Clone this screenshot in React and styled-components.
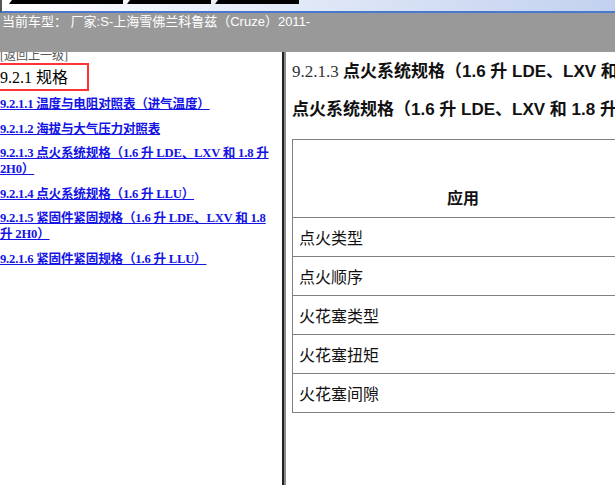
import styled, { createGlobalStyle } from "styled-components";

const GlobalStyle = createGlobalStyle`
  html, body {
    margin: 0;
    padding: 0;
    width: 615px;
    height: 485px;
    overflow: hidden;
    background: #fff;
  }
`;

const Page = styled.div`
  display: flex;
  flex-direction: column;
  width: 615px;
  height: 485px;
`;

const TopStrip = styled.div`
  display: flex;
  gap: 4px;
  height: 11px;
  padding-left: 7px;
  border-left: 2px solid #555;
  border-bottom: 2px solid #4a78cc;
  background: linear-gradient(to right, #ffffff, #c2d1ef);
`;

const Tab = styled.div`
  width: ${(p) => p.w}px;
  height: 4px;
  background: #000;
  clip-path: polygon(3px 0, 100% 0, 100% 100%, 0 100%);
`;

const CarBar = styled.div`
  height: 39px;
  background: #999999;
  color: #fff;
  font-family: "Liberation Sans", "Noto Sans CJK SC", sans-serif;
  font-size: 13px;
  line-height: 17px;
  padding: 0 2px;
  white-space: nowrap;
  box-sizing: border-box;
`;

const Body = styled.div`
  flex: 1;
  display: flex;
  min-height: 0;
`;

const Sidebar = styled.nav`
  width: 282px;
  flex: none;
  overflow: hidden;
  font-family: "Liberation Serif", "Noto Sans CJK SC", serif;
`;

const Divider = styled.div`
  width: 2px;
  flex: none;
  background: #222;
  border-right: 2px solid #8a8a8a;
`;

const BackLink = styled.div`
  margin-top: -3px;
  font-size: 12px;
  line-height: 14px;
  color: #555;
`;

const SectionTitle = styled.h2`
  display: inline-block;
  margin: 0;
  width: 87px;
  padding: 3px 0 2px;
  border: 2px solid #f33;
  border-left-width: 0;
  font-size: 16px;
  font-weight: normal;
  line-height: 19px;
  color: #000;
  white-space: nowrap;
`;

const LinkList = styled.div`
  margin-top: 5px;
  padding-right: 8px;
`;

const NavLink = styled.a`
  display: block;
  margin-bottom: 8.5px;
  font-size: 12.6px;
  font-weight: bold;
  line-height: 16px;
  letter-spacing: -0.2px;
  color: #1414e6;
  text-decoration: underline;
`;

const Content = styled.main`
  flex: 1;
  min-width: 0;
  overflow: hidden;
  padding: 10px 0 0 6px;
`;

const Heading = styled.div`
  white-space: nowrap;
  font-family: "Liberation Sans", "Noto Sans CJK SC", sans-serif;
  font-size: 17px;
  font-weight: bold;
  line-height: 20px;
  color: #111;
  margin-bottom: ${(p) => p.gap}px;
`;

const Num = styled.span`
  font-family: "Liberation Serif", serif;
  font-weight: normal;
  color: #333;
`;

const SpecTable = styled.table`
  border-collapse: collapse;
  width: 342px;
  font-family: "Liberation Sans", "Noto Sans CJK SC", sans-serif;
  font-size: 16px;
  color: #111;
`;

const HeadCell = styled.th`
  height: 69px;
  padding: 0 0 8px;
  vertical-align: bottom;
  border: 1px solid #808080;
  font-weight: bold;
`;

const Cell = styled.td`
  height: 38px;
  padding: 0 6px;
  border: 1px solid #808080;
  font-weight: normal;
`;

const links = [
  "9.2.1.1 温度与电阻对照表（进气温度）",
  "9.2.1.2 海拔与大气压力对照表",
  "9.2.1.3 点火系统规格（1.6 升 LDE、LXV 和 1.8 升 2H0）",
  "9.2.1.4 点火系统规格（1.6 升 LLU）",
  "9.2.1.5 紧固件紧固规格（1.6 升 LDE、LXV 和 1.8 升 2H0）",
  "9.2.1.6 紧固件紧固规格（1.6 升 LLU）",
];

const rows = ["点火类型", "点火顺序", "火花塞类型", "火花塞扭矩", "火花塞间隙"];

export default function App() {
  return (
    <>
      <GlobalStyle />
      <Page>
        <TopStrip>
          <Tab w={114} />
          <Tab w={84} />
          <Tab w={84} />
        </TopStrip>
        <CarBar>当前车型： 厂家:S-上海雪佛兰科鲁兹（Cruze）2011-</CarBar>
        <Body>
          <Sidebar>
            <BackLink>[返回上一级]</BackLink>
            <SectionTitle>9.2.1 规格</SectionTitle>
            <LinkList>
              {links.map((text) => (
                <NavLink key={text} href="#">
                  {text}
                </NavLink>
              ))}
            </LinkList>
          </Sidebar>
          <Divider />
          <Content>
            <Heading gap={18}>
              <Num>9.2.1.3 </Num>点火系统规格（1.6 升 LDE、LXV 和 1.8 升 2H0）
            </Heading>
            <Heading gap={19}>点火系统规格（1.6 升 LDE、LXV 和 1.8 升 2H0）</Heading>
            <SpecTable>
              <thead>
                <tr>
                  <HeadCell>应用</HeadCell>
                </tr>
              </thead>
              <tbody>
                {rows.map((r) => (
                  <tr key={r}>
                    <Cell>{r}</Cell>
                  </tr>
                ))}
              </tbody>
            </SpecTable>
          </Content>
        </Body>
      </Page>
    </>
  );
}
